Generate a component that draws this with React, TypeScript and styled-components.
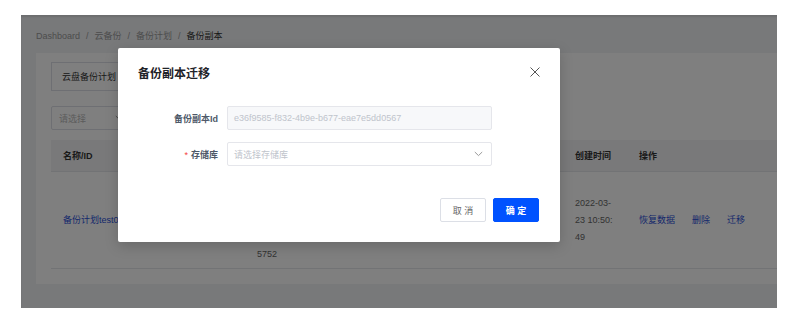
import React from "react";
import styled, { createGlobalStyle } from "styled-components";

const Global = createGlobalStyle`
  html, body { margin: 0; padding: 0; background: #ffffff; }
  body { font-family: "Liberation Sans", "Noto Sans CJK SC", sans-serif; font-size: 9px; color: #333; }
  * { box-sizing: border-box; }
`;

const Viewport = styled.div`
  padding: 15px 0 0 21px;
`;

const Frame = styled.div`
  position: relative;
  width: 756px;
  height: 293px;
  overflow: hidden;
  background: #f0f2f5;
`;

const Page = styled.div`
  width: 900px;
  height: 100%;
  padding: 0 0 0 15px;
  box-shadow: inset 0 2px 2px rgba(0, 0, 0, 0.1);
`;

const Crumbs = styled.nav`
  display: flex;
  align-items: center;
  padding-top: 15px;
  height: 27px;
  line-height: 12px;
  font-size: 9px;
  color: #9a9a9a;
`;

const Crumb = styled.span<{ $current?: boolean }>`
  color: ${(p) => (p.$current ? "#333" : "#9a9a9a")};
`;

const Sep = styled.span`
  margin: 0 6px;
  color: #9a9a9a;
`;

const Card = styled.section`
  margin-top: 11px;
  height: 231px;
  background: #fff;
  padding: 9px 0 0 15px;
  display: flex;
  flex-direction: column;
`;

const TabBox = styled.div`
  align-self: flex-start;
  height: 29px;
  padding: 0 10px;
  display: flex;
  align-items: center;
  border: 1px solid #dcdfe6;
  color: #333;
  font-size: 9px;
  width: 120px;
`;

const FilterSelect = styled.div`
  margin-top: 15px;
  width: 80px;
  height: 24px;
  border: 1px solid #dcdfe6;
  border-radius: 2px;
  display: flex;
  align-items: center;
  justify-content: space-between;
  padding: 0 6px 0 7px;
  color: #b8b8b8;
  font-size: 9px;
`;

const Table = styled.div`
  margin-top: 10px;
  display: grid;
  grid-template-columns: 194px 150px 84px 84px 64px 1fr;
`;

const HeadCell = styled.div`
  height: 32px;
  display: flex;
  align-items: center;
  padding-left: 12px;
  background: #f2f3f5;
  border-bottom: 1px solid #e5e6eb;
  font-weight: bold;
  color: #333;
  font-size: 9px;
`;

const Cell = styled.div`
  height: 97px;
  display: flex;
  flex-direction: column;
  justify-content: center;
  padding-left: 12px;
  border-bottom: 1px solid #e5e6eb;
  line-height: 17px;
  color: #666;
  font-size: 9px;
  white-space: nowrap;
`;

const LinkText = styled.span`
  color: #2b4fd8;
`;

const Ops = styled.div`
  display: flex;
  gap: 17px;
`;

const Mask = styled.div`
  position: absolute;
  inset: 0;
  background: rgba(0, 0, 0, 0.5);
  display: flex;
  align-items: flex-start;
  padding: 33px 0 0 97px;
`;

const Modal = styled.div`
  width: 442px;
  background: #fff;
  border-radius: 2px;
  box-shadow: 0 4px 14px rgba(0, 0, 0, 0.18);
  padding: 0 21px 20px 20px;
  display: flex;
  flex-direction: column;
`;

const ModalHeader = styled.div`
  height: 48px;
  display: flex;
  align-items: center;
  justify-content: space-between;
`;

const Title = styled.h2`
  margin: 0;
  font-size: 12px;
  font-weight: bold;
  color: #1f2329;
`;

const CloseBtn = styled.button`
  border: 0;
  background: none;
  padding: 0;
  margin-right: -1px;
  width: 10px;
  height: 10px;
  display: flex;
  cursor: pointer;
`;

const Form = styled.div`
  padding-top: 10px;
  display: flex;
  flex-direction: column;
  gap: 12px;
`;

const Row = styled.div`
  display: flex;
  align-items: center;
  gap: 9px;
`;

const Label = styled.label`
  width: 80px;
  text-align: right;
  font-size: 9px;
  font-weight: bold;
  color: #4e5969;
`;

const Star = styled.span`
  color: #f53f3f;
  margin-right: 3px;
  font-weight: normal;
`;

const Field = styled.div<{ $disabled?: boolean }>`
  width: 265px;
  height: 24px;
  border: 1px solid #e5e6eb;
  border-radius: 2px;
  background: ${(p) => (p.$disabled ? "#f7f8fa" : "#fff")};
  display: flex;
  align-items: center;
  justify-content: space-between;
  padding: 0 8px 0 6px;
  color: #c0c4cc;
  font-size: 9px;
`;

const Footer = styled.div`
  margin-top: 32px;
  display: flex;
  justify-content: flex-end;
  gap: 7px;
`;

const Button = styled.button<{ $primary?: boolean }>`
  width: 46px;
  height: 24px;
  border-radius: 2px;
  font-family: inherit;
  font-size: 9px;
  padding: 0;
  border: 1px solid ${(p) => (p.$primary ? "#0052ff" : "#dcdfe6")};
  background: ${(p) => (p.$primary ? "#0052ff" : "#fff")};
  color: ${(p) => (p.$primary ? "#fff" : "#666")};
  font-weight: ${(p) => (p.$primary ? "bold" : "normal")};
  cursor: pointer;
`;

const Chevron = ({ color = "#888" }: { color?: string }) => (
  <svg width="9" height="6" viewBox="0 0 9 6" fill="none">
    <polyline points="0.8,1 4.5,4.6 8.2,1" stroke={color} strokeWidth="1" />
  </svg>
);

const CloseIcon = () => (
  <svg width="10" height="10" viewBox="0 0 10 10" fill="none">
    <line x1="0.5" y1="0.5" x2="9.5" y2="9.5" stroke="#555" strokeWidth="1" />
    <line x1="9.5" y1="0.5" x2="0.5" y2="9.5" stroke="#555" strokeWidth="1" />
  </svg>
);

const idLines = ["c81d4e2a-", "9f10-4b7c-", "a3e5-0d2b6", "8f1c4a9e2", "5752"];

export default function App() {
  return (
    <>
      <Global />
      <Viewport>
        <Frame>
          <Page>
            <Crumbs>
              <Crumb>Dashboard</Crumb>
              <Sep>/</Sep>
              <Crumb>云备份</Crumb>
              <Sep>/</Sep>
              <Crumb>备份计划</Crumb>
              <Sep>/</Sep>
              <Crumb $current>备份副本</Crumb>
            </Crumbs>
            <Card>
              <TabBox>云盘备份计划</TabBox>
              <FilterSelect>
                <span>请选择</span>
                <Chevron />
              </FilterSelect>
              <Table>
                <HeadCell>名称/ID</HeadCell>
                <HeadCell>副本ID</HeadCell>
                <HeadCell>大小</HeadCell>
                <HeadCell>状态</HeadCell>
                <HeadCell>创建时间</HeadCell>
                <HeadCell>操作</HeadCell>
                <Cell>
                  <LinkText>备份计划test0001</LinkText>
                </Cell>
                <Cell>
                  {idLines.map((l) => (
                    <span key={l}>{l}</span>
                  ))}
                </Cell>
                <Cell>20 GB</Cell>
                <Cell>可用</Cell>
                <Cell>
                  <span>2022-03-</span>
                  <span>23 10:50:</span>
                  <span>49</span>
                </Cell>
                <Cell>
                  <Ops>
                    <LinkText>恢复数据</LinkText>
                    <LinkText>删除</LinkText>
                    <LinkText>迁移</LinkText>
                  </Ops>
                </Cell>
              </Table>
            </Card>
          </Page>
          <Mask>
            <Modal>
              <ModalHeader>
                <Title>备份副本迁移</Title>
                <CloseBtn aria-label="关闭">
                  <CloseIcon />
                </CloseBtn>
              </ModalHeader>
              <Form>
                <Row>
                  <Label>备份副本Id</Label>
                  <Field $disabled>e36f9585-f832-4b9e-b677-eae7e5dd0567</Field>
                </Row>
                <Row>
                  <Label>
                    <Star>*</Star>存储库
                  </Label>
                  <Field>
                    <span>请选择存储库</span>
                    <Chevron color="#999" />
                  </Field>
                </Row>
              </Form>
              <Footer>
                <Button>取 消</Button>
                <Button $primary>确 定</Button>
              </Footer>
            </Modal>
          </Mask>
        </Frame>
      </Viewport>
    </>
  );
}
